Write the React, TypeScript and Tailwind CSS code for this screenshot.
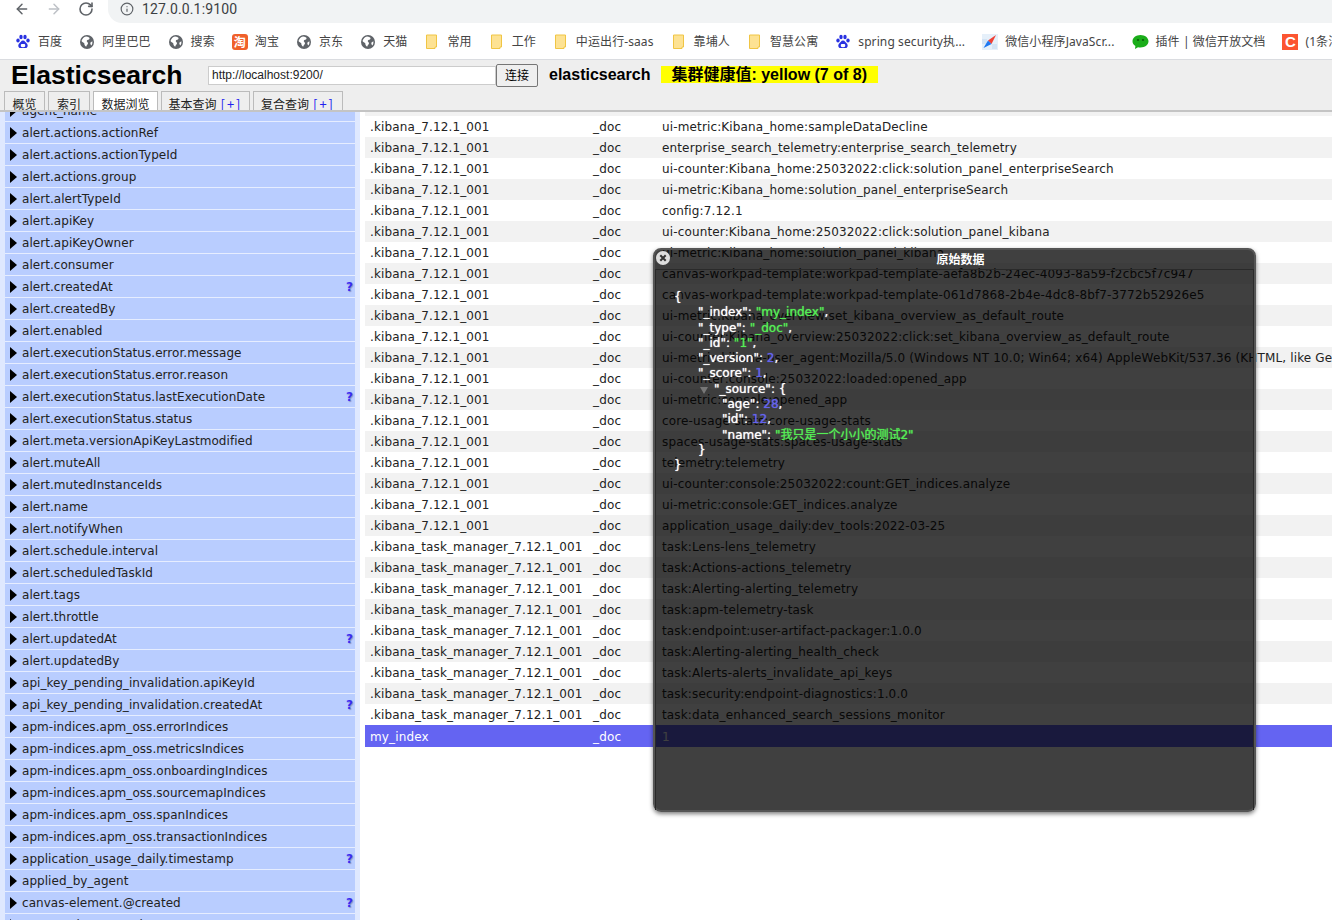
import React from "react";
import { ArrowLeft, ArrowRight, RotateCw, Info } from "lucide-react";

const sans = "font-['DejaVu_Sans','Noto_Sans_CJK_SC',sans-serif]";
const cjk = "font-['Noto_Sans','Noto_Sans_CJK_SC',sans-serif]";

const fields: [string, boolean?][] = [
  ["agent_name"],
  ["alert.actions.actionRef"],
  ["alert.actions.actionTypeId"],
  ["alert.actions.group"],
  ["alert.alertTypeId"],
  ["alert.apiKey"],
  ["alert.apiKeyOwner"],
  ["alert.consumer"],
  ["alert.createdAt", true],
  ["alert.createdBy"],
  ["alert.enabled"],
  ["alert.executionStatus.error.message"],
  ["alert.executionStatus.error.reason"],
  ["alert.executionStatus.lastExecutionDate", true],
  ["alert.executionStatus.status"],
  ["alert.meta.versionApiKeyLastmodified"],
  ["alert.muteAll"],
  ["alert.mutedInstanceIds"],
  ["alert.name"],
  ["alert.notifyWhen"],
  ["alert.schedule.interval"],
  ["alert.scheduledTaskId"],
  ["alert.tags"],
  ["alert.throttle"],
  ["alert.updatedAt", true],
  ["alert.updatedBy"],
  ["api_key_pending_invalidation.apiKeyId"],
  ["api_key_pending_invalidation.createdAt", true],
  ["apm-indices.apm_oss.errorIndices"],
  ["apm-indices.apm_oss.metricsIndices"],
  ["apm-indices.apm_oss.onboardingIndices"],
  ["apm-indices.apm_oss.sourcemapIndices"],
  ["apm-indices.apm_oss.spanIndices"],
  ["apm-indices.apm_oss.transactionIndices"],
  ["application_usage_daily.timestamp", true],
  ["applied_by_agent"],
  ["canvas-element.@created", true],
  ["canvas-element.@timestamp"],
];

const kibanaDocs = [
  "ui-metric:Kibana_home:sampleDataDecline",
  "enterprise_search_telemetry:enterprise_search_telemetry",
  "ui-counter:Kibana_home:25032022:click:solution_panel_enterpriseSearch",
  "ui-metric:Kibana_home:solution_panel_enterpriseSearch",
  "config:7.12.1",
  "ui-counter:Kibana_home:25032022:click:solution_panel_kibana",
  "ui-metric:Kibana_home:solution_panel_kibana",
  "canvas-workpad-template:workpad-template-aefa8b2b-24ec-4093-8a59-f2cbc5f7c947",
  "canvas-workpad-template:workpad-template-061d7868-2b4e-4dc8-8bf7-3772b52926e5",
  "ui-metric:Kibana_overview:set_kibana_overview_as_default_route",
  "ui-counter:Kibana_overview:25032022:click:set_kibana_overview_as_default_route",
  "ui-metric:kibana-user_agent:Mozilla/5.0 (Windows NT 10.0; Win64; x64) AppleWebKit/537.36 (KHTML, like Gecko) Chrome/99.0",
  "ui-counter:console:25032022:loaded:opened_app",
  "ui-metric:console:opened_app",
  "core-usage-stats:core-usage-stats",
  "spaces-usage-stats:spaces-usage-stats",
  "telemetry:telemetry",
  "ui-counter:console:25032022:count:GET_indices.analyze",
  "ui-metric:console:GET_indices.analyze",
  "application_usage_daily:dev_tools:2022-03-25",
];

const taskDocs = [
  "task:Lens-lens_telemetry",
  "task:Actions-actions_telemetry",
  "task:Alerting-alerting_telemetry",
  "task:apm-telemetry-task",
  "task:endpoint:user-artifact-packager:1.0.0",
  "task:Alerting-alerting_health_check",
  "task:Alerts-alerts_invalidate_api_keys",
  "task:security:endpoint-diagnostics:1.0.0",
  "task:data_enhanced_search_sessions_monitor",
];

const Paw = () => (
  <svg width="16" height="16" viewBox="0 0 16 16" className="shrink-0">
    <g fill="#2932e1">
      <ellipse cx="3" cy="6.5" rx="1.7" ry="2.1" />
      <ellipse cx="6" cy="3" rx="1.7" ry="2.2" />
      <ellipse cx="10" cy="3" rx="1.7" ry="2.2" />
      <ellipse cx="13" cy="6.5" rx="1.7" ry="2.1" />
      <path d="M8 6.500c-2 0-2.400 2-3.800 3-1.300 1-1.400 4.500 1.300 4.600 1 0 1.600-.4 2.500-.4s1.500.4 2.500.4c2.700-.1 2.600-3.600 1.300-4.600-1.400-1-1.800-3-3.800-3z" />
    </g>
    <rect x="5.800" y="10" width="4.400" height="3" rx="1" fill="#fff" />
  </svg>
);

const Globe = () => (
  <svg width="16" height="16" viewBox="0 0 16 16" className="shrink-0">
    <circle cx="8" cy="8" r="7" fill="#5f6368" />
    <path d="M7 2.500c2 .3 4 .8 3.500 2.300-.4 1.200-2.200.8-2.700 2-.4 1 1.500 1.500 1.200 2.700-.3 1.300-1.600 1.600-1.800 3.200-1.500-.6-2-2.600-2-3.800-.8-.3-2-1-2.700-2C3.200 4.800 4.800 2.900 7 2.500z" fill="#fff" />
    <path d="M11.500 8.500l1.800-1.300c.3 1.500 0 3-1 4.300-.8-.8-1.200-2-.8-3z" fill="#fff" />
  </svg>
);

const Folder = () => (
  <svg width="16" height="16" viewBox="0 0 16 16" className="shrink-0">
    <path d="M2.500 1h10v12h-1.500v1.500H2.500z" fill="#fde293" stroke="#f0c544" strokeWidth="1" />
  </svg>
);

const Taobao = () => (
  <span className="relative shrink-0 w-4 h-4 rounded-[3px] bg-[#f0602a] text-white text-[12px] leading-4 text-center font-bold font-['Noto_Sans_CJK_SC',sans-serif]">
    淘
  </span>
);

const Compass = () => (
  <svg width="16" height="16" viewBox="0 0 16 16" className="shrink-0">
    <rect width="16" height="16" fill="#e6f0fa" />
    <rect width="5" height="5" x="0" y="5" fill="#d3e4f5" />
    <rect width="5" height="5" x="10" y="10" fill="#d3e4f5" />
    <path d="M14 1L9.500 10 6 6.500z" fill="#ef4136" />
    <path d="M1.500 14L6 6.500 9.500 10z" fill="#1e78f0" />
  </svg>
);

const Wechat = () => (
  <svg width="17" height="16" viewBox="0 0 17 16" className="shrink-0">
    <path d="M8.500 1C4 1 .5 3.800.5 7.300c0 2 1.100 3.700 2.900 4.800L3 15l3-1.800c.8.200 1.600.3 2.500.3 4.500 0 8-2.800 8-6.200S13 1 8.500 1z" fill="#1aad19" />
    <circle cx="6" cy="6" r="1.100" fill="#0b5c0a" />
    <circle cx="11" cy="6" r="1.100" fill="#0b5c0a" />
  </svg>
);

const Csdn = () => (
  <span className="shrink-0 w-4 h-4 bg-[#fc5531] text-white text-[15px] leading-4 text-center font-bold font-['Liberation_Sans',sans-serif]">
    C
  </span>
);

const bookmarks: [React.ReactNode, string][] = [
  [<Paw />, "百度"],
  [<Globe />, "阿里巴巴"],
  [<Globe />, "搜索"],
  [<Taobao />, "淘宝"],
  [<Globe />, "京东"],
  [<Globe />, "天猫"],
  [<Folder />, "常用"],
  [<Folder />, "工作"],
  [<Folder />, "中运出行-saas"],
  [<Folder />, "靠埔人"],
  [<Folder />, "智慧公寓"],
  [<Paw />, "spring security执..."],
  [<Compass />, "微信小程序JavaScr..."],
  [<Wechat />, "插件 | 微信开放文档"],
  [<Csdn />, "(1条消息) Elasticsearch"],
];

const Tab = ({ label, plus, active, w }: { label: string; plus?: boolean; active?: boolean; w: string }) => (
  <div
    className={`${w} h-[21px] shrink-0 overflow-hidden border border-b-0 border-[#bbb] text-center text-[12px] leading-[23px] whitespace-nowrap ${active ? "bg-[#fff]" : "bg-[#eee]"}`}
  >
    {label}
    {plus && <span className="text-[#2222ee] text-[13px] ml-1 tracking-[2px]">[+]</span>}
  </div>
);

const Row = ({ idx, id, gray, active }: { idx: string; id: string; gray?: boolean; active?: boolean }) => (
  <div
    className={`flex whitespace-nowrap text-[12px] tracking-[0.14px] pl-[5px] ${active ? "h-[22px] leading-[24px] bg-[#6464f2] text-white" : `h-[21px] leading-[23px] text-[#222] ${gray ? "bg-[#f2f2f2]" : "bg-white"}`}`}
  >
    <div className="w-[223px] shrink-0">{idx}</div>
    <div className="w-[69px] shrink-0">_doc</div>
    <div>{id}</div>
  </div>
);

const J = ({ pad, children }: { pad: string; children: React.ReactNode }) => (
  <div className={`${pad} h-[15.300px] leading-[15.300px] whitespace-nowrap`}>{children}</div>
);

const Str = ({ children }: { children: React.ReactNode }) => <span className="text-[#55ee55] [text-shadow:0_0_1px_#55ee55]">{children}</span>;
const Num = ({ children }: { children: React.ReactNode }) => <span className="text-[#6464ee] [text-shadow:0_0_1px_#6464ee]">{children}</span>;

export default function App() {
  return (
    <div className={`relative w-[1332px] h-[920px] overflow-hidden bg-white ${sans}`}>
      {/* browser toolbar */}
      <div className="h-[23px] flex items-start bg-white">
        <div className="flex w-[108px] pt-[1px] pl-[14px] gap-[16px] shrink-0">
          <ArrowLeft size={16} strokeWidth={2.200} className="text-[#5f6368]" />
          <ArrowRight size={16} strokeWidth={2.200} className="text-[#bdc1c6]" />
          <RotateCw size={16} strokeWidth={2.400} className="text-[#5f6368]" />
        </div>
        <div className="flex-1 h-[23px] flex items-start pt-[2px] bg-[#f1f3f4] rounded-bl-[14px] pl-[12px] gap-[8px]">
          <Info size={14} className="text-[#5f6368]" />
          <span className="font-['Roboto',sans-serif] text-[14px] leading-[14px] text-[#3c4043] tracking-[0.150px]">127.0.0.1:9100</span>
        </div>
      </div>
      {/* bookmarks */}
      <div className={`h-[37px] flex items-center pt-[1px] pl-[15px] gap-[17px] bg-white border-b border-[#dadce0] whitespace-nowrap ${cjk}`}>
        {bookmarks.map(([icon, text], i) => (
          <div key={i} className="flex items-center gap-[7px] shrink-0 text-[12px] tracking-[0.1px] text-[#444]">
            {icon}
            <span className="pt-[1px]">{text}</span>
          </div>
        ))}
      </div>
      {/* app header */}
      <div className="h-[52px] bg-[#eeeeee] border-b-2 border-[#c4c4c4] overflow-hidden">
        <div className="h-[31px] flex items-center pl-[11px]">
          <span className="w-[197px] shrink-0 font-['Liberation_Sans',sans-serif] font-bold text-[26.600px] text-black leading-none">Elasticsearch</span>
          <input
            readOnly
            value="http://localhost:9200/"
            className="w-[288px] h-[19px] -mt-[1px] bg-white border border-[#ccc] px-[3px] text-[12px] text-[#222] font-['Liberation_Sans',sans-serif] outline-none"
          />
          <button className="w-[42px] h-[23px] -mt-[1px] bg-[#efefef] border border-[#767676] rounded-[2px] text-[12px] text-black font-['Noto_Sans_CJK_SC',sans-serif]">连接</button>
          <span className="ml-[11px] font-['Liberation_Sans',sans-serif] font-bold text-[16px] text-black -mt-[1px]">elasticsearch</span>
          <span className="ml-[11px] h-[17px] w-[217px] -mt-[2px] pl-[10px] leading-[17px] bg-[#ffff00] font-['Liberation_Sans','Noto_Sans_CJK_SC',sans-serif] font-bold text-[16px] text-black whitespace-nowrap">集群健康值: yellow (7 of 8)</span>
        </div>
        <div className="flex pl-[4px] gap-[3px] font-['Noto_Sans_CJK_SC',sans-serif] text-[#222]">
          <Tab w="w-[41px]" label="概览" />
          <Tab w="w-[42px]" label="索引" />
          <Tab w="w-[65px]" label="数据浏览" active />
          <Tab w="w-[89px]" label="基本查询" plus />
          <Tab w="w-[90px]" label="复合查询" plus />
        </div>
      </div>
      {/* body */}
      <div className="flex h-[808px] overflow-hidden">
        <div className="w-[360px] shrink-0 bg-[#dfe8ff] px-[5px] overflow-hidden">
          <div className="-mt-[12px]">
            {fields.map(([name, q]) => (
              <div key={name} className="relative flex items-center h-[22px] bg-[#b9cdff] border-b border-[#e6edff] text-[12px] tracking-[0.05px] text-[#222] whitespace-nowrap">
                <span className="ml-[5px] mr-[5px] w-0 h-0 border-y-[6px] border-y-transparent border-l-[7px] border-l-black" />
                <span className="pt-[1px]">{name}</span>
                {q && (
                  <span className="absolute right-[2px] top-[2px] text-[12px] font-bold text-[#3a2cf0] [text-shadow:1px_1px_1px_#8a93c8]">?</span>
                )}
              </div>
            ))}
          </div>
        </div>
        <div className="flex-1 pl-[5px] overflow-hidden">
          <div className="h-[4px] bg-[#f2f2f2]" />
          {kibanaDocs.map((d, i) => (
            <Row key={d} idx=".kibana_7.12.1_001" id={d} gray={i % 2 === 1} />
          ))}
          {taskDocs.map((d, i) => (
            <Row key={d} idx=".kibana_task_manager_7.12.1_001" id={d} gray={i % 2 === 1} />
          ))}
          <Row idx="my_index" id="1" active />
        </div>
      </div>
      {/* raw data dialog */}
      <div className="absolute left-[653px] top-[248px] w-[603px] h-[564px] rounded-[8px] bg-[rgba(0,0,0,0.75)] border-2 border-[#555] shadow-[0_2px_4px_rgba(0,0,0,0.5)] text-white">
        <div className="relative h-[19px] text-center text-[12px] leading-[17px] font-bold font-['Noto_Sans_CJK_SC',sans-serif] pl-[12px]">
          原始数据
          <svg width="14" height="14" viewBox="0 0 14 14" className="absolute left-[1px] top-[1px]">
            <circle cx="7" cy="7" r="7" fill="#ddd" />
            <path d="M4.300 4.300l5.400 5.400M9.700 4.300l-5.400 5.400" stroke="#333" strokeWidth="2" />
          </svg>
        </div>
        <div className="relative border-t border-x border-[#2a2a2a] h-[541px] pt-[20px] text-[12px] [text-shadow:0_0_1px_#fff]">
          <J pad="pl-[18px]">{"{"}</J>
          <J pad="pl-[42px]">"_index": <Str>"my_index"</Str>,</J>
          <J pad="pl-[42px]">"_type": <Str>"_doc"</Str>,</J>
          <J pad="pl-[42px]">"_id": <Str>"1"</Str>,</J>
          <J pad="pl-[42px]">"_version": <Num>2</Num>,</J>
          <J pad="pl-[42px]">"_score": <Num>1</Num>,</J>
          <J pad="pl-[58px] relative">
            <span className="absolute left-[44px] top-[5px] w-0 h-0 border-x-[4px] border-x-transparent border-t-[7px] border-t-[#777]" />
            "_source": {"{"}
          </J>
          <J pad="pl-[66px]">"age": <Num>28</Num>,</J>
          <J pad="pl-[66px]">"id": <Num>12</Num>,</J>
          <J pad="pl-[66px]">"name": <Str>"我只是一个小小的测试2"</Str></J>
          <J pad="pl-[42px]">{"}"}</J>
          <J pad="pl-[18px]">{"}"}</J>
        </div>
      </div>
    </div>
  );
}
